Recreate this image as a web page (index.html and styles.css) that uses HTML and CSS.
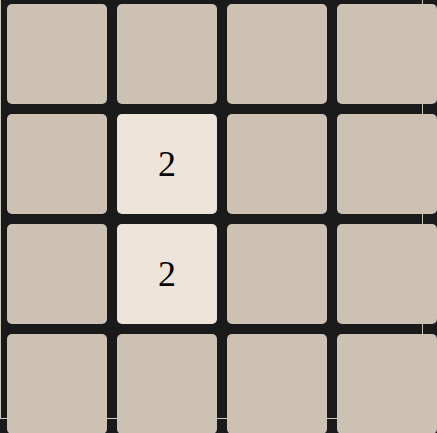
FILE: index.html
```html
<!DOCTYPE html>
<html>
<head>
<meta charset="utf-8">
<link rel="stylesheet" href="styles.css">
</head>
<body>
<div class="frame">
  <div class="grid">
    <div class="cell"></div>
    <div class="cell"></div>
    <div class="cell"></div>
    <div class="cell"></div>
    <div class="cell"></div>
    <div class="cell tile">2</div>
    <div class="cell"></div>
    <div class="cell"></div>
    <div class="cell"></div>
    <div class="cell tile">2</div>
    <div class="cell"></div>
    <div class="cell"></div>
    <div class="cell"></div>
    <div class="cell"></div>
    <div class="cell"></div>
    <div class="cell"></div>
  </div>
</div>
</body>
</html>
```
FILE: styles.css
```css
html, body {
  margin: 0;
  padding: 0;
  background: #1a1a1a;
  height: 100%;
  overflow: hidden;
}
.frame {
  width: 421px;
  height: 418px;
  border: 1px solid #cfc6bc;
  border-top: 0;
}
.grid {
  display: grid;
  grid-template-columns: repeat(4, 100px);
  grid-template-rows: repeat(4, 100px);
  gap: 10px;
  padding: 4px 0 0 6px;
}
.cell {
  background: #cdc1b4;
  border-radius: 5px;
  display: flex;
  align-items: center;
  justify-content: center;
  font-family: "Liberation Serif", "Times New Roman", serif;
  font-size: 36px;
  color: #000;
}
.tile {
  background: #eee4da;
}
```
